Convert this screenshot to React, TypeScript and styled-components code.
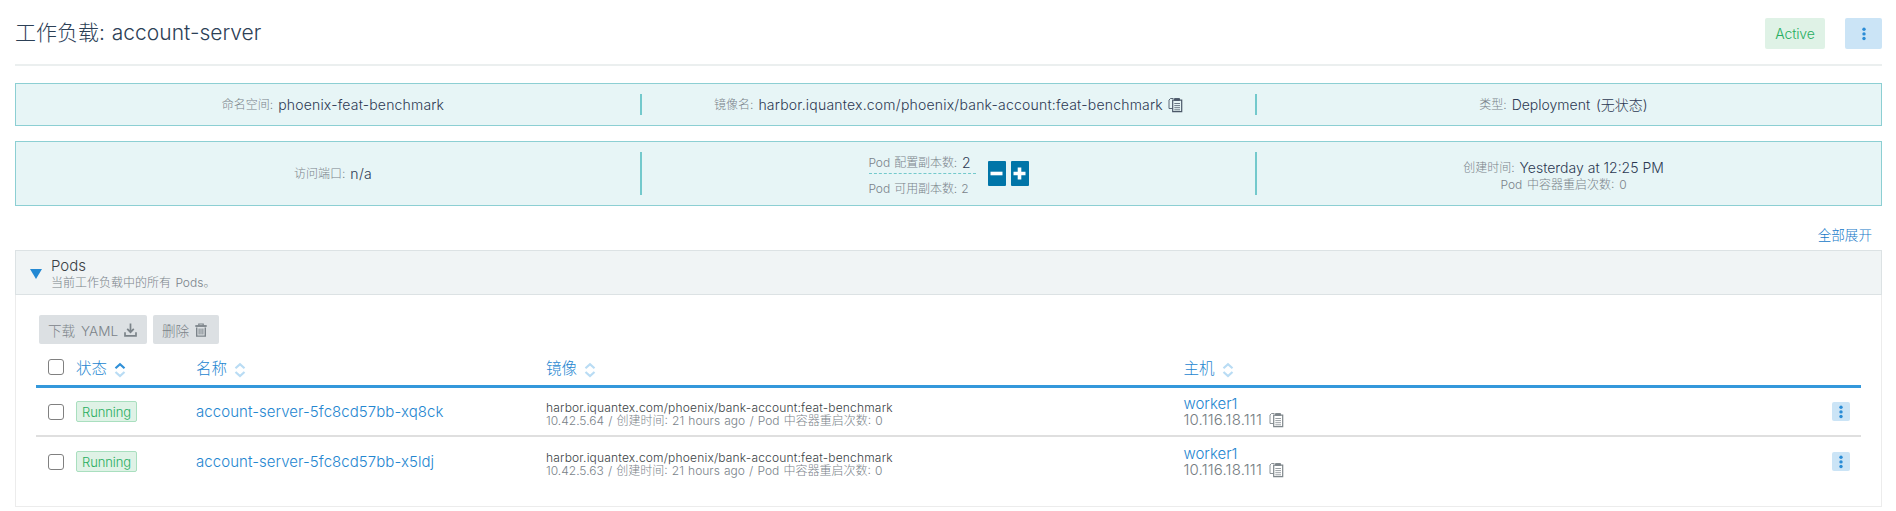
import React from "react";
import styled, { createGlobalStyle, css } from "styled-components";

const GlobalStyle = createGlobalStyle`
  * { box-sizing: border-box; }
  body {
    margin: 0;
    background: #fff;
    color: #2c4056;
    font-family: Inter, "Noto Sans CJK SC", sans-serif;
    font-size: 14px;
    font-weight: 300;
    white-space: nowrap;
  }
`;

const Page = styled.main`
  width: 1867px;
  margin-left: 15px;
`;

const Header = styled.header`
  display: flex;
  align-items: center;
  height: 66px;
  border-bottom: 2px solid #ebefef;
  padding-top: 3px;
`;

const Title = styled.h1`
  flex: 1;
  margin: -1px 0 0;
  font-size: 21px;
  font-weight: 300;
  line-height: 32px;
  word-spacing: 1px;
`;

const StateTag = styled.span`
  width: 60px;
  height: 31px;
  margin-right: 20px;
  border-radius: 2px;
  background: #dff2e6;
  color: #27ae60;
  line-height: 31px;
  text-align: center;
  letter-spacing: -0.15px;
`;

const MenuButton = styled.button<{ $compact?: boolean }>`
  display: flex;
  align-items: center;
  justify-content: center;
  width: ${(p) => (p.$compact ? 18 : 37)}px;
  height: ${(p) => (p.$compact ? 19 : 31)}px;
  padding: 0;
  border: 0;
  border-radius: 2px;
  background: #cbe4f6;
  color: #2a8cd6;
`;

const Banner = styled.section<{ $tall?: boolean }>`
  display: grid;
  grid-template-columns: repeat(3, 1fr);
  align-items: center;
  height: ${(p) => (p.$tall ? 65 : 43)}px;
  margin-top: ${(p) => (p.$tall ? 15 : 17)}px;
  padding: 0 10px;
  border: 1px solid #8ccfd3;
  background: #e7f5f6;
`;

const BannerCell = styled.div<{ $divided?: boolean; $tall?: boolean }>`
  display: flex;
  align-items: center;
  justify-content: center;
  height: ${(p) => (p.$tall ? 43 : 21)}px;
  padding-right: 1px;
  ${(p) =>
    p.$divided &&
    css`
      margin-left: -1px;
      border-left: 2px solid #73c9cc;
    `}
`;

const Stack = styled.div`
  display: flex;
  flex-direction: column;
  align-items: center;
  padding-top: 5px;
`;

const Pair = styled.div`
  display: flex;
  align-items: center;
  height: 17px;
`;

const Label = styled.span`
  color: #7a838a;
  font-size: 12px;
  line-height: 16px;
  word-spacing: 1.4px;
`;

const Value = styled.span<{ $gap?: number; $tracking?: number; $words?: number }>`
  margin-left: ${(p) => p.$gap ?? 5}px;
  color: #2d3953;
  font-size: 14px;
  line-height: 18px;
  letter-spacing: ${(p) => p.$tracking ?? 0}px;
  word-spacing: ${(p) => p.$words ?? 0}px;
`;

const CopyMark = styled.svg<{ $dim?: boolean }>`
  flex: none;
  width: 15px;
  height: 16px;
  margin-left: ${(p) => (p.$dim ? 7 : 5)}px;
  color: ${(p) => (p.$dim ? "#7e868b" : "#4b5868")};
`;

const Replicas = styled.div`
  width: 107px;
  margin-right: 12px;
`;

const ReplicaLine = styled.div<{ $dashed?: boolean }>`
  display: flex;
  align-items: center;
  height: ${(p) => (p.$dashed ? 22 : 18)}px;
  margin-top: ${(p) => (p.$dashed ? 3 : 0)}px;
  margin-bottom: ${(p) => (p.$dashed ? 6 : 0)}px;
  border-bottom: ${(p) => (p.$dashed ? "1px dashed #73c9cc" : "0")};
  ${Label} { letter-spacing: -0.1px; word-spacing: 1px; }
`;

const ScaleButtons = styled.div`
  display: flex;
  gap: 5px;
`;

const ScaleButton = styled.button`
  display: flex;
  align-items: center;
  justify-content: center;
  width: 18px;
  height: 25px;
  padding: 0;
  border: 0;
  border-radius: 1px;
  background: #0075a8;
  color: #fff;
`;

const ExpandRow = styled.div`
  display: flex;
  justify-content: flex-end;
  height: 44px;
  padding: 18px 10px 0 0;
`;

const ExpandLink = styled.a`
  color: #1478c8;
  font-size: 13.6px;
  line-height: 22px;
`;

const Panel = styled.section`
  height: 257px;
  border: 1px solid #ececec;
  border-top: 0;
`;

const PanelHead = styled.div`
  display: flex;
  align-items: center;
  gap: 9px;
  height: 45px;
  margin: 0 -1px;
  padding: 2px 0 0 14px;
  border: 1px solid #dce2e4;
  background: #f0f4f5;
`;

const Caret = styled.span`
  border: 6px solid transparent;
  border-top: 10px solid #2489d3;
  border-bottom: 0;
`;

const PanelTitle = styled.div`
  color: #3a3f45;
  font-size: 15px;
  line-height: 18px;
`;

const PanelNote = styled.div`
  color: #7a838a;
  font-size: 12px;
  line-height: 16px;
  word-spacing: 1px;
`;

const Toolbar = styled.div`
  display: flex;
  gap: 6px;
  padding: 20px 0 0 23px;
`;

const BulkButton = styled.button<{ $width: number }>`
  display: flex;
  align-items: center;
  gap: 6px;
  width: ${(p) => p.$width}px;
  height: 29px;
  padding: 0 0 0 9px;
  border: 0;
  border-radius: 2px;
  background: #dce0e3;
  color: #7b8389;
  font: inherit;
  font-size: 13.6px;
  word-spacing: 2px;
`;

const Table = styled.div`
  width: 1825px;
  margin-left: 20px;
`;

const rowGrid = css`
  display: grid;
  grid-template-columns: 28px 120px 350px 637.5px 1fr 18px;
  align-items: center;
  padding: 0 11px 0 12px;
`;

const HeadRow = styled.div`
  ${rowGrid}
  height: 44px;
  padding-top: 5px;
  border-bottom: 3px solid #3498db;
`;

const PodRow = styled.div`
  ${rowGrid}
  height: 47px;
  & + & { border-top: 2px solid #dfdfdf; height: 51px; }
`;

const HeadCell = styled.div`
  display: flex;
  align-items: center;
  gap: 7px;
  padding-top: 4px;
  color: #2486d0;
  font-size: 15.5px;
  line-height: 22px;
`;

const SortMark = styled.svg`
  width: 12px;
  height: 16px;
  margin-top: 1px;
`;

const Check = styled.input`
  appearance: none;
  width: 16px;
  height: 16px;
  margin: 0;
  border: 1px solid #808080;
  border-radius: 3px;
  background: #fff;
`;

const RunningBadge = styled.span`
  display: block;
  width: 61px;
  height: 21px;
  border: 1px solid #a9dfbf;
  border-radius: 2px;
  background: #dff2e6;
  color: #27ae60;
  font-size: 13px;
  line-height: 20px;
  text-align: center;
  letter-spacing: -0.1px;
`;

const PodLink = styled.a`
  color: #2486d0;
  font-size: 15px;
  letter-spacing: 0.06px;
`;

const ImageName = styled.div`
  color: #3a3f45;
  font-size: 12px;
  line-height: 13px;
  letter-spacing: 0.18px;
`;

const ImageMeta = styled.div`
  color: #7a838a;
  font-size: 12px;
  line-height: 13px;
  word-spacing: 0.8px;
`;

const ImageCell = styled.div`
  padding-top: 4px;
`;

const HostCell = styled.div`
  font-size: 15px;
  line-height: 16px;
`;

const HostName = styled.a`
  display: block;
  color: #2486d0;
`;

const HostAddress = styled.div`
  display: flex;
  align-items: center;
  height: 16px;
  color: #757d82;
  letter-spacing: 0.16px;
`;

const KebabIcon = () => (
  <svg width="4" height="14" viewBox="0 0 4 14" fill="currentColor">
    <circle cx="2" cy="2.3" r="1.7" />
    <circle cx="2" cy="6.9" r="1.7" />
    <circle cx="2" cy="11.5" r="1.7" />
  </svg>
);

const CopyIcon = ({ dim }: { dim?: boolean }) => (
  <CopyMark $dim={dim} viewBox="0 0 15 16" fill="none" stroke="currentColor">
    <path d="M4.5 11.5H1V3L2.5 1.5h3" strokeWidth="0.9" />
    <path d="M4.7 3.2h9v11.5h-9z" strokeWidth="1.2" />
    <path d="M6.5 1.6h5v1.8h-5z" fill="currentColor" />
    <path d="M6.3 6.5h5.7M6.3 8.6h5.7M6.3 10.7h5.7M6.3 12.8h5.7" strokeWidth="0.8" />
  </CopyMark>
);

const DownloadIcon = () => (
  <svg width="13" height="14" viewBox="0 0 13 14" fill="none" stroke="currentColor" strokeWidth="1.7">
    <path d="M6.5 0.5v8.2M3.2 5.8l3.3 3.4 3.3-3.4" />
    <path d="M1 9.3v3.6h11V9.3" />
  </svg>
);

const TrashIcon = () => (
  <svg width="12" height="14" viewBox="0 0 12 14" fill="none" stroke="currentColor">
    <path d="M0.3 3h11.4" strokeWidth="1.8" />
    <path d="M3.8 2.4V1h4.4v1.4" strokeWidth="1.2" />
    <path d="M1.7 4.5v8.6h8.6V4.5" strokeWidth="1.4" />
    <path d="M4.1 5.5v6M6 5.5v6M7.9 5.5v6" strokeWidth="1" />
  </svg>
);

const SortIcon = ({ ascending }: { ascending?: boolean }) => (
  <SortMark viewBox="0 0 12 16" fill="none" strokeWidth="2.2">
    <path d="M1.5 6.3L6 2.2l4.5 4.1" stroke={ascending ? "#3090d8" : "#b9dcf4"} />
    <path d="M1.5 10L6 14.1 10.5 10" stroke="#b9dcf4" />
  </SortMark>
);

const columns = ["状态", "名称", "镜像", "主机"];

const pods = [
  { name: "account-server-5fc8cd57bb-xq8ck", ip: "10.42.5.64" },
  { name: "account-server-5fc8cd57bb-x5ldj", ip: "10.42.5.63" },
];

const image = "harbor.iquantex.com/phoenix/bank-account:feat-benchmark";

export default function App() {
  return (
    <Page>
      <GlobalStyle />
      <Header>
        <Title>工作负载: account-server</Title>
        <StateTag>Active</StateTag>
        <MenuButton><KebabIcon /></MenuButton>
      </Header>

      <Banner>
        <BannerCell>
          <Label>命名空间:</Label>
          <Value $tracking={0.18}>phoenix-feat-benchmark</Value>
        </BannerCell>
        <BannerCell $divided>
          <Label>镜像名:</Label>
          <Value $tracking={0.21}>{image}</Value>
          <CopyIcon />
        </BannerCell>
        <BannerCell $divided>
          <Label>类型:</Label>
          <Value $words={2}>Deployment (无状态)</Value>
        </BannerCell>
      </Banner>

      <Banner $tall>
        <BannerCell $tall>
          <Label>访问端口:</Label>
          <Value $tracking={0.3}>n/a</Value>
        </BannerCell>
        <BannerCell $tall $divided>
          <Replicas>
            <ReplicaLine $dashed>
              <Label>Pod 配置副本数:</Label>
              <Value>2</Value>
            </ReplicaLine>
            <ReplicaLine>
              <Label>Pod 可用副本数: 2</Label>
            </ReplicaLine>
          </Replicas>
          <ScaleButtons>
            <ScaleButton>
              <svg width="13" height="13" viewBox="0 0 13 13"><path d="M0.5 6.5h12" stroke="currentColor" strokeWidth="3.6" /></svg>
            </ScaleButton>
            <ScaleButton>
              <svg width="13" height="13" viewBox="0 0 13 13"><path d="M0.5 6.5h12M6.5 0.5v12" stroke="currentColor" strokeWidth="3.6" /></svg>
            </ScaleButton>
          </ScaleButtons>
        </BannerCell>
        <BannerCell $tall $divided>
          <Stack>
            <Pair>
              <Label>创建时间:</Label>
              <Value>Yesterday at 12:25 PM</Value>
            </Pair>
            <Label>Pod 中容器重启次数: 0</Label>
          </Stack>
        </BannerCell>
      </Banner>

      <ExpandRow>
        <ExpandLink>全部展开</ExpandLink>
      </ExpandRow>

      <Panel>
        <PanelHead>
          <Caret />
          <div>
            <PanelTitle>Pods</PanelTitle>
            <PanelNote>当前工作负载中的所有 Pods。</PanelNote>
          </div>
        </PanelHead>
        <Toolbar>
          <BulkButton $width={108}>下载 YAML <DownloadIcon /></BulkButton>
          <BulkButton $width={66}>删除 <TrashIcon /></BulkButton>
        </Toolbar>
        <Table>
          <HeadRow>
            <Check type="checkbox" />
            {columns.map((label, i) => (
              <HeadCell key={label}>{label}<SortIcon ascending={i === 0} /></HeadCell>
            ))}
          </HeadRow>
          {pods.map((pod) => (
            <PodRow key={pod.name}>
              <Check type="checkbox" />
              <RunningBadge>Running</RunningBadge>
              <PodLink>{pod.name}</PodLink>
              <ImageCell>
                <ImageName>{image}</ImageName>
                <ImageMeta>{pod.ip} / 创建时间: 21 hours ago / Pod 中容器重启次数: 0</ImageMeta>
              </ImageCell>
              <HostCell>
                <HostName>worker1</HostName>
                <HostAddress>10.116.18.111<CopyIcon dim /></HostAddress>
              </HostCell>
              <MenuButton $compact><KebabIcon /></MenuButton>
            </PodRow>
          ))}
        </Table>
      </Panel>
    </Page>
  );
}
